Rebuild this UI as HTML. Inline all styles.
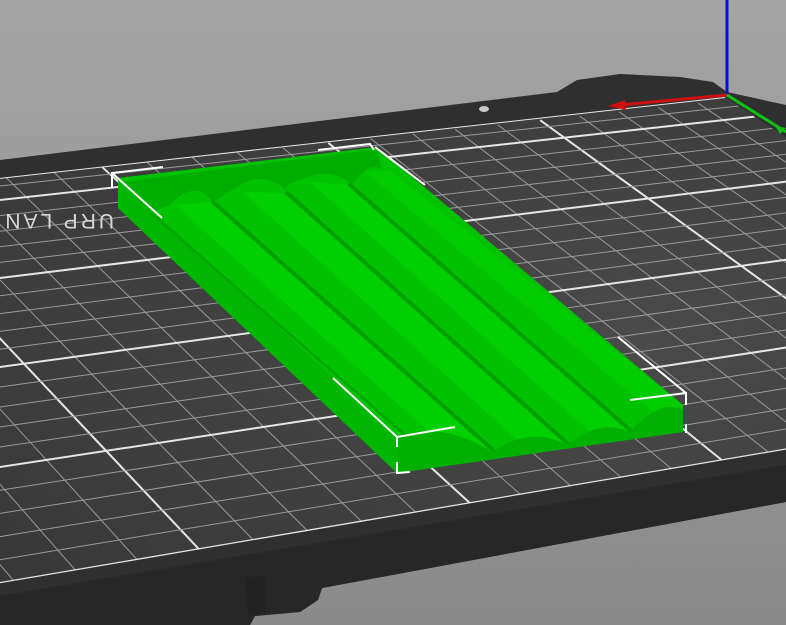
<!DOCTYPE html>
<html><head><meta charset="utf-8"><style>
html,body{margin:0;padding:0;width:786px;height:625px;overflow:hidden;background:#999}
svg{display:block}
</style></head><body>
<svg id="s" width="786" height="625" viewBox="0 0 786 625" xmlns="http://www.w3.org/2000/svg">
<defs>
<linearGradient id="bg" x1="0" y1="0" x2="0" y2="1"><stop offset="0" stop-color="#a4a4a4"/><stop offset="1" stop-color="#8a8a8a"/></linearGradient>
<radialGradient id="gs" cx="0.55" cy="0.5" r="0.7"><stop offset="0" stop-color="#4a4a4a"/><stop offset="1" stop-color="#383838"/></radialGradient>
<clipPath id="gc"><polygon points="-10,179 725,97 1160,386 -10,585"/></clipPath>
</defs>
<rect width="786" height="625" fill="url(#bg)"/>
<polygon points="0,160 557,92 577,80 620,74 680,77 713,82 727,92 786,105 786,502 322,588 318,600 300,612 255,616 250,625 0,625" fill="#2f2f2f"/>
<polygon points="0,596 786,465 786,502 322,588 318,600 300,612 255,616 250,625 0,625" fill="#272727"/>
<polygon points="245,578 265,575 265,612 248,616" fill="#222"/>
<ellipse cx="484" cy="109" rx="5" ry="3" fill="#c8c8c8"/>
<polygon points="-10,179 725,97 1160,386 -10,585" fill="url(#gs)"/>
<g id="grid" clip-path="url(#gc)"></g>
<text x="0" y="0" transform="translate(114,214) scale(-1,-1)" font-family="Liberation Sans, sans-serif" font-size="21" fill="#d8d8d8" letter-spacing="3" text-anchor="start">URP LAN</text>
<polygon points="118,178 377,147 683,405 683,432 397,473 118,208" fill="#00c200"/>
<polygon points="118,178 118,208 397,473 397,437" fill="#00b600"/>
<line x1="150" y1="212" x2="420" y2="448" stroke="#00a600" stroke-width="2.5"/>
<path d="M122,182 L377,149 L382,170 Q370,160 352,185 Q330,165 300,180 Q280,185 290,193 Q265,170 240,185 L213,202 Q195,178 170,205 L150,213 Z" fill="#00ae00"/>
<polygon points="175,205 213,202 493,450 455,455" fill="#00cf00"/>
<polygon points="243,192 287,193 567,443 525,447" fill="#00cf00"/>
<polygon points="310,182 350,185 630,430 595,436" fill="#00cf00"/>
<polygon points="365,172 390,170 683,405 660,418" fill="#00cc00"/>
<g stroke="#009c00" stroke-width="4" stroke-linecap="round" opacity="0.9">
<line x1="213" y1="202" x2="493" y2="450"/>
<line x1="287" y1="193" x2="567" y2="443"/>
<line x1="350" y1="185" x2="630" y2="430"/>
</g>
<path d="M397,437 Q440,420 493,452 Q530,425 567,445 Q600,418 630,432 Q660,398 683,410 L683,432 L397,473 Z" fill="#00b000"/>
<g stroke="#fff" stroke-width="2" fill="none">
<polyline points="163,167 112,173 112,188"/>
<line x1="112" y1="173" x2="162" y2="218"/>
<polyline points="318,150 370,144 374,150"/>
<line x1="375" y1="147" x2="425" y2="185"/>
<polyline points="455,427 397,437 397,447"/>
<line x1="397" y1="437" x2="333" y2="378"/>
<polyline points="397,462 397,473 410,472"/>
<polyline points="630,400 686,393 686,405"/>
<line x1="686" y1="393" x2="618" y2="337"/>
<line x1="686" y1="424" x2="686" y2="433"/>
</g>
<line x1="727" y1="0" x2="727" y2="95" stroke="#0010d0" stroke-width="3"/>
<line x1="727" y1="95" x2="620" y2="105" stroke="#d01010" stroke-width="3"/>
<polygon points="608,106 625,100 626,110" fill="#d01010"/>
<line x1="727" y1="95" x2="786" y2="132" stroke="#10c010" stroke-width="3"/>
<polygon points="786,128 775,126 780,134" fill="#10c010"/>
</svg>
<script>
(function(){
var g=document.getElementById('grid'),ns='http://www.w3.org/2000/svg';
function L(x1,y1,x2,y2,maj){var l=document.createElementNS(ns,'line');l.setAttribute('x1',x1);l.setAttribute('y1',y1);l.setAttribute('x2',x2);l.setAttribute('y2',y2);l.setAttribute('stroke',maj?'#e6e6e6':'#9a9a9a');l.setAttribute('stroke-width',maj?2:1);g.appendChild(l);}
var Vx=-1821,Vy=-1590;
function B(x){return 583-0.17*x;}
var maj=[-110,199,470,722,955,1170];
for(var i=0;i<maj.length-1;i++){for(var k=0;k<5;k++){var xb=maj[i]+(maj[i+1]-maj[i])*k/5;var yb=B(xb);var m=(yb-Vy)/(xb-Vx);var xt=(178-Vy+m*Vx)/(m+0.107);var yt=Vy+m*(xt-Vx);L(xt,yt,xb,yb,k==0);}}
var hm=[583,467,367,278,200,130];
for(var i=0;i<hm.length-1;i++){for(var k=0;k<5;k++){var y0=hm[i]+(hm[i+1]-hm[i])*k/5;if(y0<178)continue;var s=-0.107+(-0.17+0.107)*(y0-178)/(583-178);var xr=(y0+383.4)/(0.6626-s);L(-10,y0-10*s,xr,y0+s*xr,k==0);}}
L(-10,179,725,97,true);
})();
</script>
</body></html>
